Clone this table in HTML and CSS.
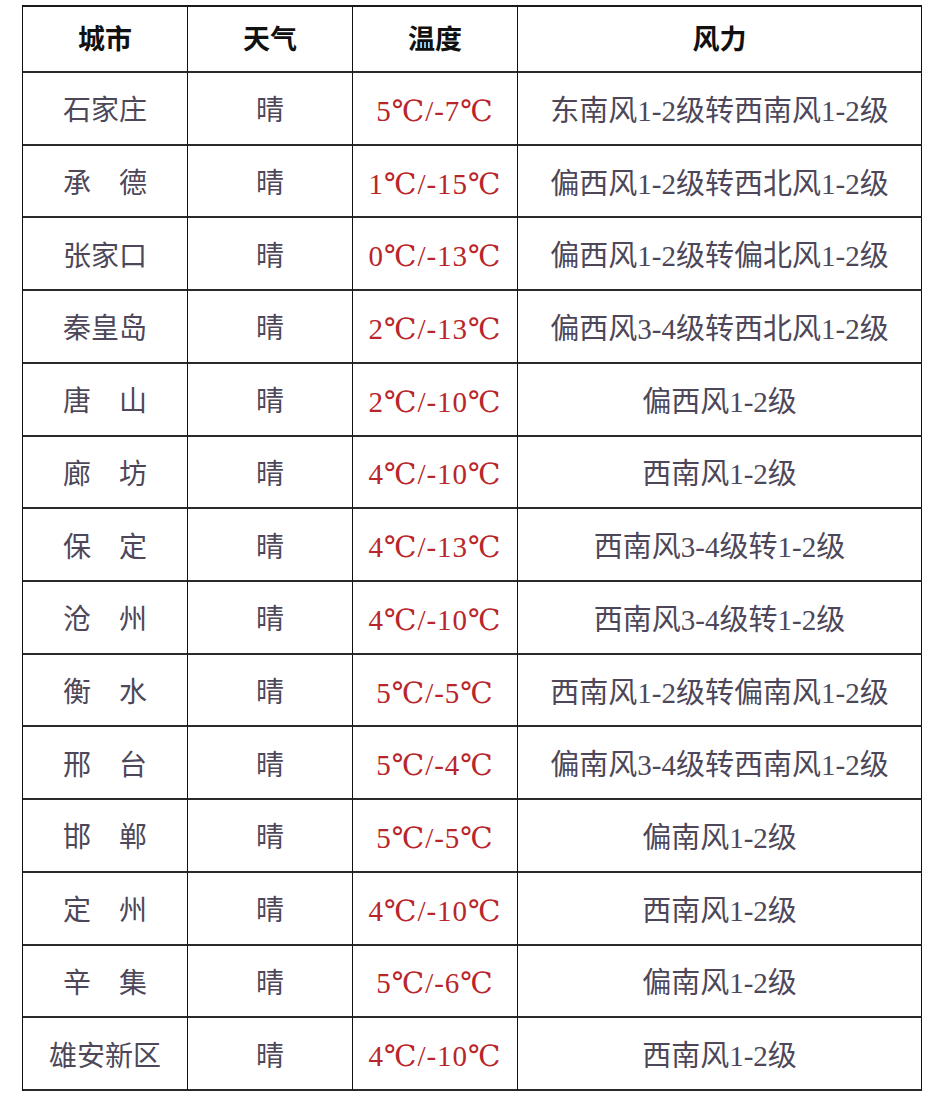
FILE: index.html
```html
<!DOCTYPE html>
<html lang="zh-CN">
<head>
<meta charset="utf-8">
<title>河北天气</title>
<link rel="stylesheet" href="styles.css">
</head>
<body>
<div class="table">
  <div class="cell head">城市</div><div class="cell head">天气</div><div class="cell head">温度</div><div class="cell head">风力</div>

  <div class="cell city">石家庄</div><div class="cell wx">晴</div><div class="cell temp">5℃/-7℃</div><div class="cell wind">东南风1-2级转西南风1-2级</div>
  <div class="cell city">承　德</div><div class="cell wx">晴</div><div class="cell temp">1℃/-15℃</div><div class="cell wind">偏西风1-2级转西北风1-2级</div>
  <div class="cell city">张家口</div><div class="cell wx">晴</div><div class="cell temp">0℃/-13℃</div><div class="cell wind">偏西风1-2级转偏北风1-2级</div>
  <div class="cell city">秦皇岛</div><div class="cell wx">晴</div><div class="cell temp">2℃/-13℃</div><div class="cell wind">偏西风3-4级转西北风1-2级</div>
  <div class="cell city">唐　山</div><div class="cell wx">晴</div><div class="cell temp">2℃/-10℃</div><div class="cell wind">偏西风1-2级</div>
  <div class="cell city">廊　坊</div><div class="cell wx">晴</div><div class="cell temp">4℃/-10℃</div><div class="cell wind">西南风1-2级</div>
  <div class="cell city">保　定</div><div class="cell wx">晴</div><div class="cell temp">4℃/-13℃</div><div class="cell wind">西南风3-4级转1-2级</div>
  <div class="cell city">沧　州</div><div class="cell wx">晴</div><div class="cell temp">4℃/-10℃</div><div class="cell wind">西南风3-4级转1-2级</div>
  <div class="cell city">衡　水</div><div class="cell wx">晴</div><div class="cell temp">5℃/-5℃</div><div class="cell wind">西南风1-2级转偏南风1-2级</div>
  <div class="cell city">邢　台</div><div class="cell wx">晴</div><div class="cell temp">5℃/-4℃</div><div class="cell wind">偏南风3-4级转西南风1-2级</div>
  <div class="cell city">邯　郸</div><div class="cell wx">晴</div><div class="cell temp">5℃/-5℃</div><div class="cell wind">偏南风1-2级</div>
  <div class="cell city">定　州</div><div class="cell wx">晴</div><div class="cell temp">4℃/-10℃</div><div class="cell wind">西南风1-2级</div>
  <div class="cell city">辛　集</div><div class="cell wx">晴</div><div class="cell temp">5℃/-6℃</div><div class="cell wind">偏南风1-2级</div>
  <div class="cell city">雄安新区</div><div class="cell wx">晴</div><div class="cell temp">4℃/-10℃</div><div class="cell wind">西南风1-2级</div>
</div>
</body>
</html>
```

FILE: styles.css
```css
html, body {
  margin: 0;
  padding: 0;
  background: #ffffff;
}

body {
  padding: 5px 0 0 22px;
}

.table {
  display: grid;
  grid-template-columns: 165px 165px 165px 404px;
  grid-template-rows: 66px repeat(14, 1fr);
  width: 900px;
  height: 1086px;
  box-sizing: border-box;
  border-top: 2px solid #1a1a1a;
  border-left: 1px solid #111111;
  font-family: "Liberation Serif", "Noto Sans CJK SC", serif;
}

.cell {
  display: flex;
  align-items: center;
  justify-content: center;
  border-right: 1px solid #111111;
  border-bottom: 2px solid #2a2a2a;
  padding-top: 6px;
  box-sizing: border-box;
  white-space: nowrap;
  color: #4d4759;
  font-size: 28px;
  line-height: 1;
}

.head {
  color: #111111;
  font-weight: 700;
  font-size: 27px;
  padding-top: 3px;
}

.temp {
  color: #b8262b;
  font-size: 29px;
  font-family: "Liberation Serif", "DejaVu Serif", "Noto Sans CJK SC", serif;
  letter-spacing: 1px;
}

.wind {
  font-size: 29px;
}
```
